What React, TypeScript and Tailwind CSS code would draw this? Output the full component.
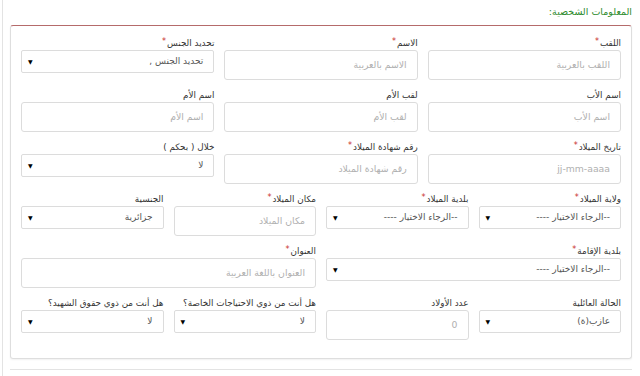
import React from "react";

const font = { fontFamily: '"DejaVu Sans", "Noto Sans", sans-serif' };

function Label({ text, req }: { text: string; req?: boolean }) {
  return (
    <div className="h-[13px] leading-[13px] text-[8.8px] text-[#333] whitespace-nowrap">
      {text}
      {req && <span className="text-[#c9302c] text-[8px] relative top-[-2px] mr-[1px]">*</span>}
    </div>
  );
}

function TextField({ label, req, placeholder, value }: { label: string; req?: boolean; placeholder?: string; value?: string }) {
  return (
    <div className="flex flex-col">
      <Label text={label} req={req} />
      <div className="h-[30px] border border-[#dcdcdc] rounded-[3px] bg-white flex items-center px-[10px] text-[9.3px]">
        <span className="text-[#b0b0b0]">{value ?? placeholder}</span>
      </div>
    </div>
  );
}

function SelectField({ label, req, value }: { label: string; req?: boolean; value: string }) {
  return (
    <div className="flex flex-col">
      <Label text={label} req={req} />
      <div className="h-[23px] border border-[#dcdcdc] rounded-[2px] bg-white flex items-center justify-between pr-[10px] pl-[6px] text-[9px]">
        <span className="text-[#555]">{value}</span>
        <span className="text-[6px] text-black leading-none">▼</span>
      </div>
    </div>
  );
}

export default function App() {
  const choose = "--الرجاء الاختيار ----";
  return (
    <div dir="rtl" style={font} className="w-[640px] h-[376px] bg-white overflow-hidden">
      <div className="h-[376px] ml-[2px] border-l border-[#e3e3e3] pr-[8px] pl-[7px]">
        <div className="h-[25px] pt-[5px] text-[9.5px] leading-[14px] text-[#2e8b2e]">المعلومات الشخصية:</div>
        <div className="border border-[#dedede] border-t-[#b56b6b] rounded-[3px] shadow-[0_1px_2px_rgba(0,0,0,0.06)] px-[10px] pt-[11px] pb-[18px] flex flex-col gap-y-[9px]">
          <div className="grid grid-cols-3 gap-x-[10px]">
            <TextField label="اللقب" req placeholder="اللقب بالعربية" />
            <TextField label="الاسم" req placeholder="الاسم بالعربية" />
            <SelectField label="تحديد الجنس" req value="تحديد الجنس ," />
          </div>
          <div className="grid grid-cols-3 gap-x-[10px]">
            <TextField label="اسم الأب" placeholder="اسم الأب" />
            <TextField label="لقب الأم" placeholder="لقب الأم" />
            <TextField label="اسم الأم" placeholder="اسم الأم" />
          </div>
          <div className="grid grid-cols-3 gap-x-[10px]">
            <TextField label="تاريخ الميلاد" req placeholder="jj-mm-aaaa" />
            <TextField label="رقم شهادة الميلاد" req placeholder="رقم شهادة الميلاد" />
            <SelectField label="خلال ( بحكم )" value="لا" />
          </div>
          <div className="grid grid-cols-4 gap-x-[10px]">
            <SelectField label="ولاية الميلاد" req value={choose} />
            <SelectField label="بلدية الميلاد" req value={choose} />
            <TextField label="مكان الميلاد" req placeholder="مكان الميلاد" />
            <SelectField label="الجنسية" value="جزائرية" />
          </div>
          <div className="grid grid-cols-4 gap-x-[10px]">
            <div className="col-span-2">
              <SelectField label="بلدية الإقامة" req value={choose} />
            </div>
            <div className="col-span-2">
              <TextField label="العنوان" req placeholder="العنوان باللغة العربية" />
            </div>
          </div>
          <div className="grid grid-cols-4 gap-x-[10px]">
            <SelectField label="الحالة العائلية" value="عازب(ة)" />
            <TextField label="عدد الأولاد" value="0" />
            <SelectField label="هل أنت من ذوي الاحتياجات الخاصة؟" value="لا" />
            <SelectField label="هل أنت من ذوي حقوق الشهيد؟" value="لا" />
          </div>
        </div>
        <div className="mt-[10px] border-t border-[#e3e3e3]" />
      </div>
    </div>
  );
}
